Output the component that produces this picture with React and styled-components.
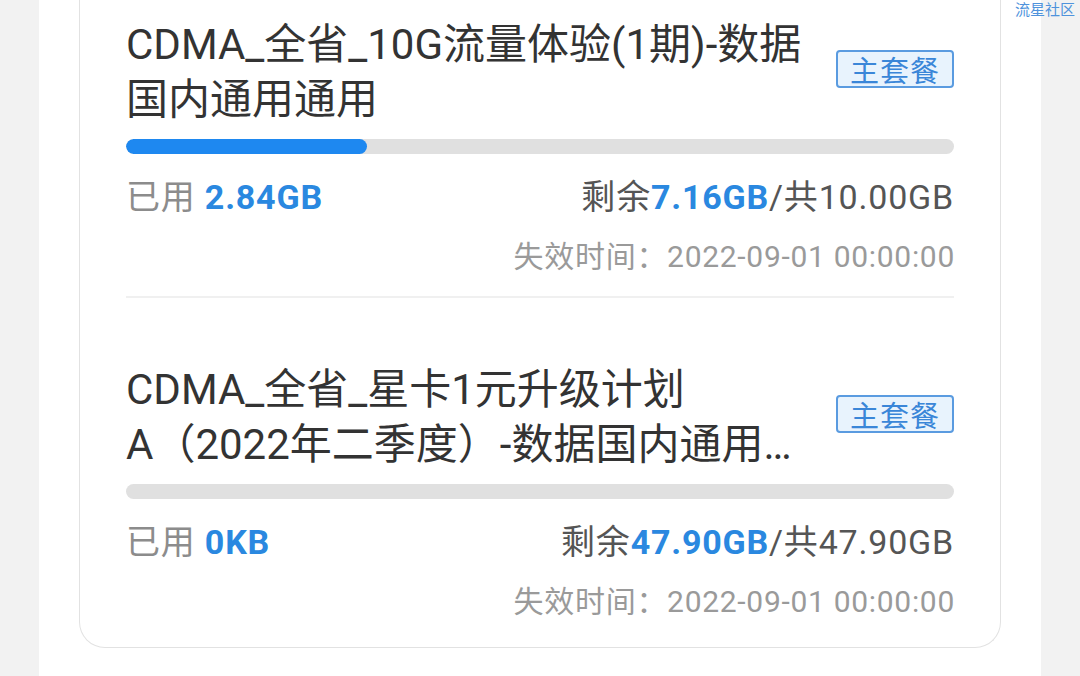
import React from "react";
import styled, { createGlobalStyle } from "styled-components";

const Global = createGlobalStyle`
  html, body { margin: 0; padding: 0; background: #ffffff; }
  body { font-family: Roboto, "Noto Sans CJK SC", sans-serif; }
  * { box-sizing: border-box; }
`;

const Page = styled.div`
  position: relative;
  display: flex;
  width: 1080px;
  height: 676px;
  overflow: hidden;
`;

const SideStrip = styled.div`
  width: 39px;
  flex: none;
  background: #f2f2f2;
`;

const Main = styled.div`
  flex: 1;
  min-width: 0;
  background: #ffffff;
  padding: 0 40px;
`;

const Card = styled.div`
  border: 1px solid #e2e2e2;
  border-top: none;
  border-radius: 0 0 26px 26px;
  padding: 0 46px 25px;
  background: #fff;
`;

const Item = styled.div`
  padding-top: ${(p) => p.$top}px;
  padding-bottom: ${(p) => (p.$divider ? 19 : 0)}px;
  border-bottom: ${(p) => (p.$divider ? "2px solid #f0f0f0" : "none")};
`;

const TitleRow = styled.div`
  display: flex;
  align-items: center;
  justify-content: space-between;
  gap: 10px;
`;

const Title = styled.div`
  flex: 1;
  min-width: 0;
  max-width: 678px;
  font-size: 42px;
  line-height: 55px;
  color: #333333;
  display: -webkit-box;
  -webkit-box-orient: vertical;
  -webkit-line-clamp: 2;
  overflow: hidden;
  word-break: break-all;
`;

const NoWrap = styled.span`
  white-space: nowrap;
`;

const Tag = styled.span`
  flex: none;
  display: inline-flex;
  align-items: center;
  justify-content: center;
  width: 118px;
  height: 38px;
  border: 2px solid #5a9be0;
  border-radius: 4px;
  background: #e8f3fd;
  color: #3a86d8;
  font-family: "Noto Sans CJK SC", sans-serif;
  font-size: 29px;
  letter-spacing: 1px;
  margin-top: ${(p) => p.$shift || 0}px;
`;

const Track = styled.div`
  height: 15px;
  border-radius: 8px;
  background: #e0e0e0;
  margin-top: 12px;
  overflow: hidden;
`;

const Fill = styled.div`
  height: 100%;
  border-radius: 8px;
  background: #1e88f0;
`;

const UsageRow = styled.div`
  display: flex;
  justify-content: space-between;
  align-items: center;
  margin-top: 18px;
  height: 44px;
  font-size: 34px;
  letter-spacing: 0.8px;
`;

const Muted = styled.span`
  color: #8c8c8c;
`;

const Dark = styled.span`
  color: #555555;
`;

const Value = styled.span`
  color: #2a88e0;
  font-weight: 700;
`;

const Expiry = styled.div`
  text-align: right;
  margin-top: 21px;
  height: 40px;
  line-height: 40px;
  font-size: 30px;
  letter-spacing: 0.7px;
  color: #9a9a9a;
  margin-right: -1px;
`;

const Watermark = styled.div`
  position: absolute;
  top: 1px;
  right: 5px;
  font-family: "Noto Sans CJK SC", sans-serif;
  font-size: 15px;
  line-height: 16px;
  color: #4f93dc;
`;

const plans = [
  {
    title: "CDMA_全省_10G流量体验(1期)-数据国内通用通用",
    percent: 29.1,
    used: "2.84GB",
    left: "7.16GB",
    total: "10.00GB",
    expire: "2022-09-01 00:00:00",
    top: 17,
    shift: -6,
  },
  {
    title: (
      <>
        CDMA_全省_星卡1元升级计划<NoWrap>A（2022年</NoWrap>二季度）-数据国内通用通用
      </>
    ),
    percent: 0,
    used: "0KB",
    left: "47.90GB",
    total: "47.90GB",
    expire: "2022-09-01 00:00:00",
    top: 64,
    shift: -6,
  },
];

export default function App() {
  return (
    <>
      <Global />
      <Page>
        <SideStrip />
        <Main>
          <Card>
            {plans.map((p, i) => (
              <Item key={i} $top={p.top} $divider={i < plans.length - 1}>
                <TitleRow>
                  <Title>{p.title}</Title>
                  <Tag $shift={p.shift}>主套餐</Tag>
                </TitleRow>
                <Track>
                  {p.percent > 0 && <Fill style={{ width: `${p.percent}%` }} />}
                </Track>
                <UsageRow>
                  <span>
                    <Muted>已用 </Muted>
                    <Value>{p.used}</Value>
                  </span>
                  <span>
                    <Dark>剩余</Dark>
                    <Value>{p.left}</Value>
                    <Dark>/共{p.total}</Dark>
                  </span>
                </UsageRow>
                <Expiry>失效时间：{p.expire}</Expiry>
              </Item>
            ))}
          </Card>
        </Main>
        <SideStrip />
        <Watermark>流星社区</Watermark>
      </Page>
    </>
  );
}
